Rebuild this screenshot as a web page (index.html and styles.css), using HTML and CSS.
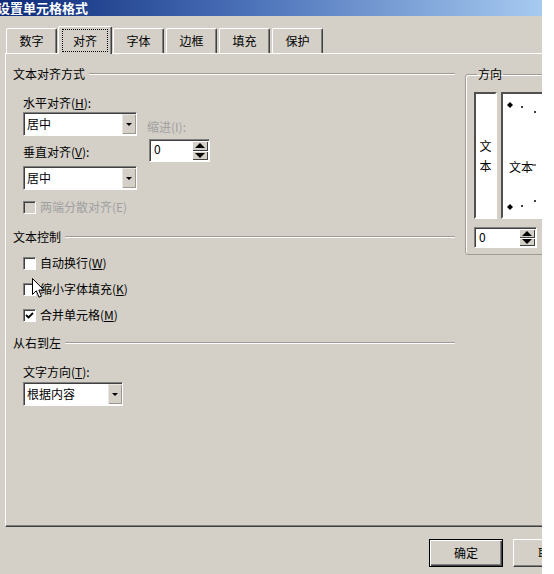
FILE: index.html
```html
<!DOCTYPE html>
<html>
<head>
<meta charset="utf-8">
<link rel="stylesheet" href="styles.css">
</head>
<body>
<div class="dialog">
  <div class="titlebar"><span class="title">设置单元格格式</span></div>

  <div class="tabs">
    <div class="tab">数字</div>
    <div class="tab active"><span class="focus">对齐</span></div>
    <div class="tab">字体</div>
    <div class="tab">边框</div>
    <div class="tab">填充</div>
    <div class="tab">保护</div>
  </div>

  <div class="panel">
    <div class="left">
      <div class="section"><span>文本对齐方式</span><span class="rule"></span></div>

      <div class="align-block">
        <div class="col-main">
          <div class="label">水平对齐(<u>H</u>):</div>
          <div class="combo"><span class="value">居中</span><span class="drop"><i class="tri-down"></i></span></div>
          <div class="label label-second">垂直对齐(<u>V</u>):</div>
          <div class="combo combo-second"><span class="value">居中</span><span class="drop"><i class="tri-down"></i></span></div>
        </div>
        <div class="col-indent">
          <div class="label disabled">缩进(I):</div>
          <div class="spin">
            <span class="value">0</span>
            <span class="spin-btns">
              <span class="spin-btn"><i class="arrow-up"></i></span>
              <span class="spin-btn"><i class="arrow-down"></i></span>
            </span>
          </div>
        </div>
      </div>

      <div class="check disabled check-first"><span class="box box-off"></span>两端分散对齐(E)</div>

      <div class="section section-gap"><span>文本控制</span><span class="rule"></span></div>
      <div class="check check-list"><span class="box"></span>自动换行(<u>W</u>)</div>
      <div class="check check-list cursor-row">
        <span class="box"></span>缩小字体填充(<u>K</u>)
        <svg class="cursor" width="13" height="21" viewBox="0 0 13 21">
          <path d="M0.5 0.5 L0.5 16.5 L4.3 12.8 L7 19.2 L9.4 18.2 L6.8 12 L11.8 12 Z" fill="#fff" stroke="#000" stroke-width="1"/>
        </svg>
      </div>
      <div class="check check-list">
        <span class="box">
          <svg width="9" height="9" viewBox="0 0 9 9"><path d="M1 4 L3.5 6.5 L8 2" fill="none" stroke="#000" stroke-width="1.8"/></svg>
        </span>合并单元格(<u>M</u>)
      </div>

      <div class="section section-rtl"><span>从右到左</span><span class="rule"></span></div>
      <div class="label label-dir">文字方向(<u>T</u>):</div>
      <div class="combo combo-dir"><span class="value">根据内容</span><span class="drop"><i class="tri-down"></i></span></div>
    </div>

    <div class="right">
      <fieldset class="group">
        <legend>方向</legend>
        <div class="orient">
          <div class="vtext">文<br>本</div>
          <div class="dial">
            <svg width="60" height="123" viewBox="0 0 60 123">
              <path d="M7 8 L10 11 L7 14 L4 11 Z" fill="#000"/>
              <circle cx="19" cy="13" r="1" fill="#000"/>
              <circle cx="32" cy="18" r="1" fill="#000"/>
              <circle cx="45" cy="15" r="1" fill="#000"/>
              <text x="6" y="78" font-size="12" font-family="Noto Sans CJK SC, sans-serif" fill="#000">文本</text>
              <line x1="29" y1="71" x2="33" y2="71" stroke="#000" stroke-width="1"/>
              <path d="M7 110 L10 113 L7 116 L4 113 Z" fill="#000"/>
              <circle cx="19" cy="112" r="1" fill="#000"/>
              <circle cx="32" cy="107" r="1" fill="#000"/>
            </svg>
          </div>
        </div>
        <div class="spin spin-deg">
          <span class="value">0</span>
          <span class="spin-btns">
            <span class="spin-btn"><i class="arrow-up"></i></span>
            <span class="spin-btn"><i class="arrow-down"></i></span>
          </span>
        </div>
      </fieldset>
    </div>
  </div>

  <div class="buttons">
    <div class="btn btn-default">确定</div>
    <div class="btn">取消</div>
  </div>
</div>
</body>
</html>
```

FILE: styles.css
```css
body {
  margin: 0;
  background: #fff;
  font-family: "Noto Sans CJK SC", "Liberation Sans", sans-serif;
  font-size: 12px;
  color: #000;
}

.dialog {
  width: 542px;
  height: 574px;
  background: #d4d0c8;
  overflow: hidden;
  display: flex;
  flex-direction: column;
}

.titlebar {
  height: 16px;
  background: linear-gradient(to right, #0c2a78, #4a70b8 45%, #a6caf0);
  color: #fff;
  font-weight: bold;
  font-size: 13px;
  line-height: 16px;
  white-space: nowrap;
}
.title {
  margin-left: -3px;
}

/* tab strip */
.tabs {
  margin-top: 10px;
  height: 27px;
  padding-left: 6px;
  display: flex;
  align-items: flex-end;
}
.tab {
  width: 51px;
  height: 25px;
  margin-right: 2px;
  box-sizing: border-box;
  border-top: 1px solid #fff;
  border-left: 1px solid #fff;
  border-right: 1px solid #404040;
  box-shadow: inset -1px 0 #808080;
  border-radius: 2px 2px 0 0;
  display: flex;
  align-items: center;
  justify-content: center;
  line-height: 14px;
}
.tab.active {
  position: relative;
  z-index: 1;
  width: 54px;
  height: 28px;
  margin-left: -1px;
  margin-right: 1px;
  margin-bottom: -1px;
  background: #d4d0c8;
}
.focus {
  outline: 1px dotted #000;
  outline-offset: 0;
  width: 44px;
  height: 21px;
  display: flex;
  align-items: center;
  justify-content: center;
}

/* main panel */
.panel {
  margin-left: 5px;
  margin-right: -8px;
  height: 474px;
  box-sizing: border-box;
  border-top: 1px solid #fff;
  border-left: 1px solid #fff;
  border-right: 1px solid #404040;
  border-bottom: 1px solid #404040;
  box-shadow: inset 0 -1px #808080;
  padding: 13px 0 0 7px;
  display: flex;
  gap: 10px;
}
.left {
  flex: none;
  width: 442px;
}
.right {
  flex: 1;
  min-width: 0;
}

.section {
  display: flex;
  align-items: center;
  height: 14px;
  line-height: 14px;
}
.rule {
  flex: 1;
  margin-left: 4px;
  border-top: 1px solid #a09c94;
  border-bottom: 1px solid #fff;
}
.section-gap { margin-top: 16px; }
.section-rtl { margin-top: 14px; }

.label {
  height: 14px;
  line-height: 14px;
  white-space: nowrap;
}
.disabled {
  color: #a0a0a0;
}

.align-block {
  margin-top: 15px;
  padding-left: 10px;
  display: flex;
}
.col-main {
  width: 114px;
}
.col-indent {
  margin-left: 10px;
  padding-top: 24px;
}
.label-second { margin-top: 9px; }

/* combo box */
.combo {
  margin-top: 2px;
  height: 24px;
  box-sizing: border-box;
  background: #fff;
  border: 1px solid;
  border-color: #808080 #fff #fff #808080;
  box-shadow: inset 1px 1px #404040;
  display: flex;
  align-items: stretch;
}
.combo .value {
  flex: 1;
  padding: 1px 0 0 3px;
  line-height: 20px;
}
.combo-second { margin-top: 7px; }
.drop {
  width: 14px;
  margin: 1px 0 1px 0;
  background: #d4d0c8;
  box-shadow: inset 1px 1px #e8e6e0, inset -1px -1px #9c9890;
  display: flex;
  align-items: center;
  justify-content: center;
}
.tri-down {
  width: 0;
  height: 0;
  border-left: 3px solid transparent;
  border-right: 3px solid transparent;
  border-top: 3px solid #000;
}

/* spinner */
.spin {
  margin: 5px 0 0 2px;
  width: 61px;
  height: 23px;
  box-sizing: border-box;
  background: #fff;
  border: 1px solid;
  border-color: #808080 #fff #fff #808080;
  box-shadow: inset 1px 1px #404040;
  display: flex;
}
.spin .value {
  flex: 1;
  padding: 1px 0 0 4px;
  line-height: 16px;
}
.spin-btns {
  width: 16px;
  margin: 1px 1px 1px 0;
  display: flex;
  flex-direction: column;
}
.spin-btn {
  flex: 1;
  background: #d4d0c8;
  box-shadow: inset 1px 1px #fff, inset -1px -1px #404040;
  display: flex;
  align-items: center;
  justify-content: center;
}
.arrow-up {
  width: 0;
  height: 0;
  border-left: 5px solid transparent;
  border-right: 5px solid transparent;
  border-bottom: 5px solid #000;
}
.arrow-down {
  width: 0;
  height: 0;
  border-left: 5px solid transparent;
  border-right: 5px solid transparent;
  border-top: 5px solid #000;
}

/* checkboxes */
.check {
  height: 14px;
  line-height: 14px;
  padding-left: 10px;
  display: flex;
  align-items: center;
  white-space: nowrap;
}
.check-first { margin-top: 10px; }
.check-list { margin-top: 12px; }
.box {
  width: 13px;
  height: 13px;
  box-sizing: border-box;
  margin-right: 4px;
  background: #fff;
  border: 1px solid;
  border-color: #808080 #fff #fff #808080;
  box-shadow: inset 1px 1px #404040;
  display: flex;
  align-items: center;
  justify-content: center;
}
.box-off {
  background: #d4d0c8;
}
.cursor-row {
  position: relative;
}
.cursor {
  position: absolute;
  left: 19px;
  top: -4px;
}

.label-dir {
  margin-top: 15px;
  padding-left: 10px;
}
.combo-dir {
  margin: 3px 0 0 10px;
  width: 100px;
}

/* orientation group */
.group {
  margin: 0;
  padding: 0 0 5px 8px;
  width: 120px;
  height: 188px;
  box-sizing: border-box;
  border: 1px solid #a09c94;
  border-radius: 3px;
  box-shadow: inset 1px 1px #fff;
}
.group legend {
  padding: 0 1px;
  margin-left: 3px;
  line-height: 14px;
}
.orient {
  margin-top: 11px;
  display: flex;
  gap: 4px;
}
.vtext,
.dial {
  height: 127px;
  box-sizing: border-box;
  background: #fff;
  border: 2px solid;
  border-color: #505050 #fff #fff #505050;
}
.vtext {
  flex: none;
  width: 23px;
  display: flex;
  align-items: center;
  justify-content: center;
  text-align: center;
  line-height: 20px;
}
.dial {
  flex: none;
  width: 64px;
}
.dial svg {
  display: block;
}
.spin-deg {
  margin: 8px 0 0 0;
  width: 63px;
  height: 21px;
}
.spin-deg .spin-btns {
  width: 16px;
}

/* bottom buttons */
.buttons {
  margin-top: 12px;
  padding-left: 429px;
  display: flex;
  gap: 10px;
}
.btn {
  flex: none;
  width: 74px;
  height: 28px;
  box-sizing: border-box;
  border-top: 1px solid #fff;
  border-left: 1px solid #fff;
  border-right: 1px solid #404040;
  border-bottom: 1px solid #404040;
  box-shadow: inset -1px -1px #808080;
  display: flex;
  align-items: center;
  justify-content: center;
  line-height: 14px;
}
.btn-default {
  border: 1px solid #000;
  box-shadow: inset 1px 1px #fff, inset -1px -1px #404040, inset -2px -2px #808080;
}
```
